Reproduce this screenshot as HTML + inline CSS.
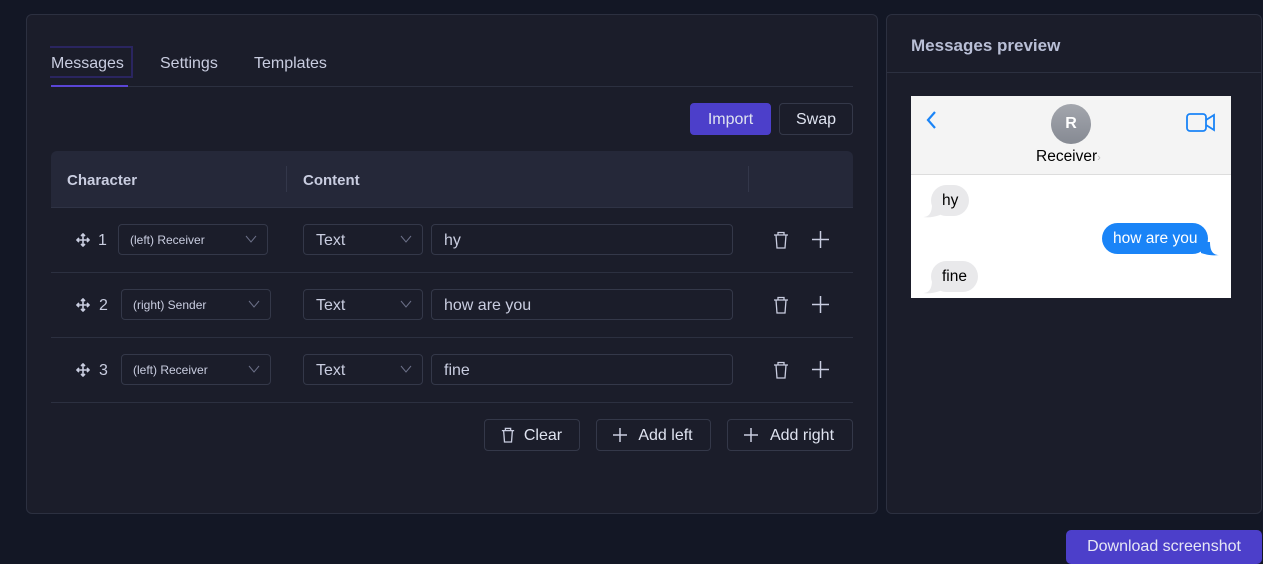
<!DOCTYPE html>
<html><head><style>
*{box-sizing:border-box;margin:0;padding:0}
body{width:1263px;height:559px;background:#131725;font-family:"Liberation Sans",sans-serif;position:relative;overflow:hidden;color:#c9cde0}
.a{position:absolute}
.panel{background:#1b1d2a;border:1px solid #2c3040;border-radius:6px}
.box{border:1px solid #343849;border-radius:4px;position:absolute;height:31px}
.sel{font-size:12px;color:#c9cde0;padding-left:11px;line-height:31px}
.big{font-size:16px;color:#c9cde0;padding-left:12px;line-height:31px}
.chev{position:absolute;right:10px;top:10px}
.btn{position:absolute;border:1px solid #343849;border-radius:4px;height:32px;font-size:16px;line-height:32px;color:#dfe3f0;text-align:center}
.hr{position:absolute;left:51px;width:802px;height:1px;background:#2c3040}
.bub{position:absolute;font-size:15.5px;border-radius:16px;height:31px;line-height:32px;padding:0 11px}
</style></head><body>
<div class="a panel" style="left:26px;top:14px;width:852px;height:500px"></div>
<div class="a panel" style="left:886px;top:14px;width:376px;height:500px"></div>

<div class="a" style="left:51px;top:55px;font-size:16px;color:#c9cde0">Messages</div>
<div class="a" style="left:50px;top:46px;width:83px;height:32px;border:2px solid #2a2560;border-left:none"></div>
<div class="a" style="left:160px;top:55px;font-size:16px;color:#c9cde0">Settings</div>
<div class="a" style="left:254px;top:55px;font-size:16px;color:#c9cde0">Templates</div>
<div class="a" style="left:51px;top:86px;width:802px;height:1px;background:#2c3040"></div>
<div class="a" style="left:51px;top:85px;width:77px;height:2px;background:#5a45d6"></div>

<div class="btn" style="left:690px;top:103px;width:81px;background:#4c3fca;border-color:#4c3fca">Import</div>
<div class="btn" style="left:779px;top:103px;width:74px">Swap</div>

<div class="a" style="left:51px;top:151px;width:802px;height:57px;background:#252839;border-radius:6px 6px 0 0;border-bottom:1px solid #2f3345"></div>
<div class="a" style="left:67px;top:172px;font-size:15px;font-weight:bold;color:#c9cde0">Character</div>
<div class="a" style="left:286px;top:166px;width:1px;height:26px;background:#33374a"></div>
<div class="a" style="left:303px;top:172px;font-size:15px;font-weight:bold;color:#c9cde0">Content</div>
<div class="a" style="left:748px;top:166px;width:1px;height:26px;background:#33374a"></div>

<div class="hr" style="top:272px"></div>
<div class="hr" style="top:337px"></div>
<div class="hr" style="top:402px"></div>

<svg class="a" style="left:76px;top:233px" width="14" height="14" viewBox="0 0 14 14" fill="none" stroke="#c9cde0" stroke-width="1.6"><path d="M7 1v12M1 7h12M5 3l2-2 2 2M5 11l2 2 2-2M3 5L1 7l2 2M11 5l2 2-2 2"/></svg>
<div class="a" style="left:98px;top:232px;font-size:16px">1</div>
<div class="box sel" style="left:118px;top:224px;width:150px">(left) Receiver<svg class="chev" width="12" height="8" viewBox="0 0 12 8"><path d="M1 1l5 6 5-6" fill="none" stroke="#6c7088"/></svg></div>
<div class="box big" style="left:303px;top:224px;width:120px">Text<svg class="chev" width="12" height="8" viewBox="0 0 12 8"><path d="M1 1l5 6 5-6" fill="none" stroke="#6c7088"/></svg></div>
<div class="box big" style="left:431px;top:224px;width:302px">hy</div>

<svg class="a" style="left:76px;top:298px" width="14" height="14" viewBox="0 0 14 14" fill="none" stroke="#c9cde0" stroke-width="1.6"><path d="M7 1v12M1 7h12M5 3l2-2 2 2M5 11l2 2 2-2M3 5L1 7l2 2M11 5l2 2-2 2"/></svg>
<div class="a" style="left:99px;top:297px;font-size:16px">2</div>
<div class="box sel" style="left:121px;top:289px;width:150px">(right) Sender<svg class="chev" width="12" height="8" viewBox="0 0 12 8"><path d="M1 1l5 6 5-6" fill="none" stroke="#6c7088"/></svg></div>
<div class="box big" style="left:303px;top:289px;width:120px">Text<svg class="chev" width="12" height="8" viewBox="0 0 12 8"><path d="M1 1l5 6 5-6" fill="none" stroke="#6c7088"/></svg></div>
<div class="box big" style="left:431px;top:289px;width:302px">how are you</div>

<svg class="a" style="left:76px;top:363px" width="14" height="14" viewBox="0 0 14 14" fill="none" stroke="#c9cde0" stroke-width="1.6"><path d="M7 1v12M1 7h12M5 3l2-2 2 2M5 11l2 2 2-2M3 5L1 7l2 2M11 5l2 2-2 2"/></svg>
<div class="a" style="left:99px;top:362px;font-size:16px">3</div>
<div class="box sel" style="left:121px;top:354px;width:150px">(left) Receiver<svg class="chev" width="12" height="8" viewBox="0 0 12 8"><path d="M1 1l5 6 5-6" fill="none" stroke="#6c7088"/></svg></div>
<div class="box big" style="left:303px;top:354px;width:120px">Text<svg class="chev" width="12" height="8" viewBox="0 0 12 8"><path d="M1 1l5 6 5-6" fill="none" stroke="#6c7088"/></svg></div>
<div class="box big" style="left:431px;top:354px;width:302px">fine</div>

<svg class="a" style="left:773px;top:231px" width="16" height="18" viewBox="0 0 16 18" fill="none" stroke="#c9cde0" stroke-width="1.3"><path d="M1 4h14M5 4V1.5h6V4M3 4l1 13h8l1-13"/></svg>
<svg class="a" style="left:812px;top:231px" width="17" height="17" viewBox="0 0 17 17" stroke="#c9cde0" stroke-width="1.5"><path d="M8.5 0v17M0 8.5h17"/></svg>
<svg class="a" style="left:773px;top:296px" width="16" height="18" viewBox="0 0 16 18" fill="none" stroke="#c9cde0" stroke-width="1.3"><path d="M1 4h14M5 4V1.5h6V4M3 4l1 13h8l1-13"/></svg>
<svg class="a" style="left:812px;top:296px" width="17" height="17" viewBox="0 0 17 17" stroke="#c9cde0" stroke-width="1.5"><path d="M8.5 0v17M0 8.5h17"/></svg>
<svg class="a" style="left:773px;top:361px" width="16" height="18" viewBox="0 0 16 18" fill="none" stroke="#c9cde0" stroke-width="1.3"><path d="M1 4h14M5 4V1.5h6V4M3 4l1 13h8l1-13"/></svg>
<svg class="a" style="left:812px;top:361px" width="17" height="17" viewBox="0 0 17 17" stroke="#c9cde0" stroke-width="1.5"><path d="M8.5 0v17M0 8.5h17"/></svg>

<div class="btn" style="left:484px;top:419px;width:96px;padding-left:22px">Clear</div>
<svg class="a" style="left:501px;top:427px" width="14" height="16" viewBox="0 0 16 18" fill="none" stroke="#c9cde0" stroke-width="1.5"><path d="M1 4h14M5 4V1.5h6V4M3 4l1 13h8l1-13"/></svg>
<div class="btn" style="left:596px;top:419px;width:115px;padding-left:24px">Add left</div>
<svg class="a" style="left:613px;top:428px" width="14" height="14" viewBox="0 0 14 14" stroke="#c9cde0" stroke-width="1.5"><path d="M7 0v14M0 7h14"/></svg>
<div class="btn" style="left:727px;top:419px;width:126px;padding-left:24px">Add right</div>
<svg class="a" style="left:744px;top:428px" width="14" height="14" viewBox="0 0 14 14" stroke="#c9cde0" stroke-width="1.5"><path d="M7 0v14M0 7h14"/></svg>

<div class="a" style="left:911px;top:36px;font-size:17px;font-weight:bold;color:#b9bfd6">Messages preview</div>
<div class="a" style="left:887px;top:72px;width:374px;height:1px;background:#2c3040"></div>
<div class="a" style="left:911px;top:96px;width:320px;height:202px;background:#fff"></div>
<div class="a" style="left:911px;top:96px;width:320px;height:79px;background:#f4f4f4;border-bottom:1px solid #ddd"></div>
<svg class="a" style="left:925px;top:110px" width="12" height="20" viewBox="0 0 12 20"><path d="M10 2L3 10l7 8" fill="none" stroke="#1a84f7" stroke-width="2.2"/></svg>
<div class="a" style="left:1051px;top:104px;width:40px;height:40px;border-radius:50%;background:linear-gradient(#a3a6ad,#868a93);color:#fff;font-weight:bold;font-size:16px;text-align:center;line-height:40px">R</div>
<div class="a" style="left:1036px;top:148px;font-size:15.5px;color:#000">Receiver<span style="color:#bbb;font-size:11px">›</span></div>
<svg class="a" style="left:1186px;top:112px" width="30" height="21" viewBox="0 0 30 21" fill="none" stroke="#1a84f7" stroke-width="1.8"><rect x="1" y="2" width="19" height="17" rx="3"/><path d="M20 8l8-5v15l-8-5"/></svg>

<svg class="a" style="left:922px;top:196px" width="20" height="22"><path d="M1 21C7 21 10 17 10 8L18 8L18 19C12 21 6 22 1 21z" fill="#e9e9eb"/></svg>
<div class="bub" style="left:931px;top:185px;background:#e9e9eb;color:#000">hy</div>
<svg class="a" style="left:1198px;top:234px" width="22" height="22"><path d="M21 21C15 21 12 17 12 8L3 8L3 19C9 21 15 22 21 21z" fill="#1a84f7"/></svg>
<div class="bub" style="left:1102px;top:223px;background:#1a84f7;color:#fff">how are you</div>
<svg class="a" style="left:922px;top:272px" width="20" height="22"><path d="M1 21C7 21 10 17 10 8L18 8L18 19C12 21 6 22 1 21z" fill="#e9e9eb"/></svg>
<div class="bub" style="left:931px;top:261px;background:#e9e9eb;color:#000">fine</div>

<div class="a" style="left:1066px;top:530px;width:196px;height:34px;background:#4c3fca;border-radius:5px;color:#e6e6f5;font-size:16px;text-align:center;line-height:33px">Download screenshot</div>
</body></html>
